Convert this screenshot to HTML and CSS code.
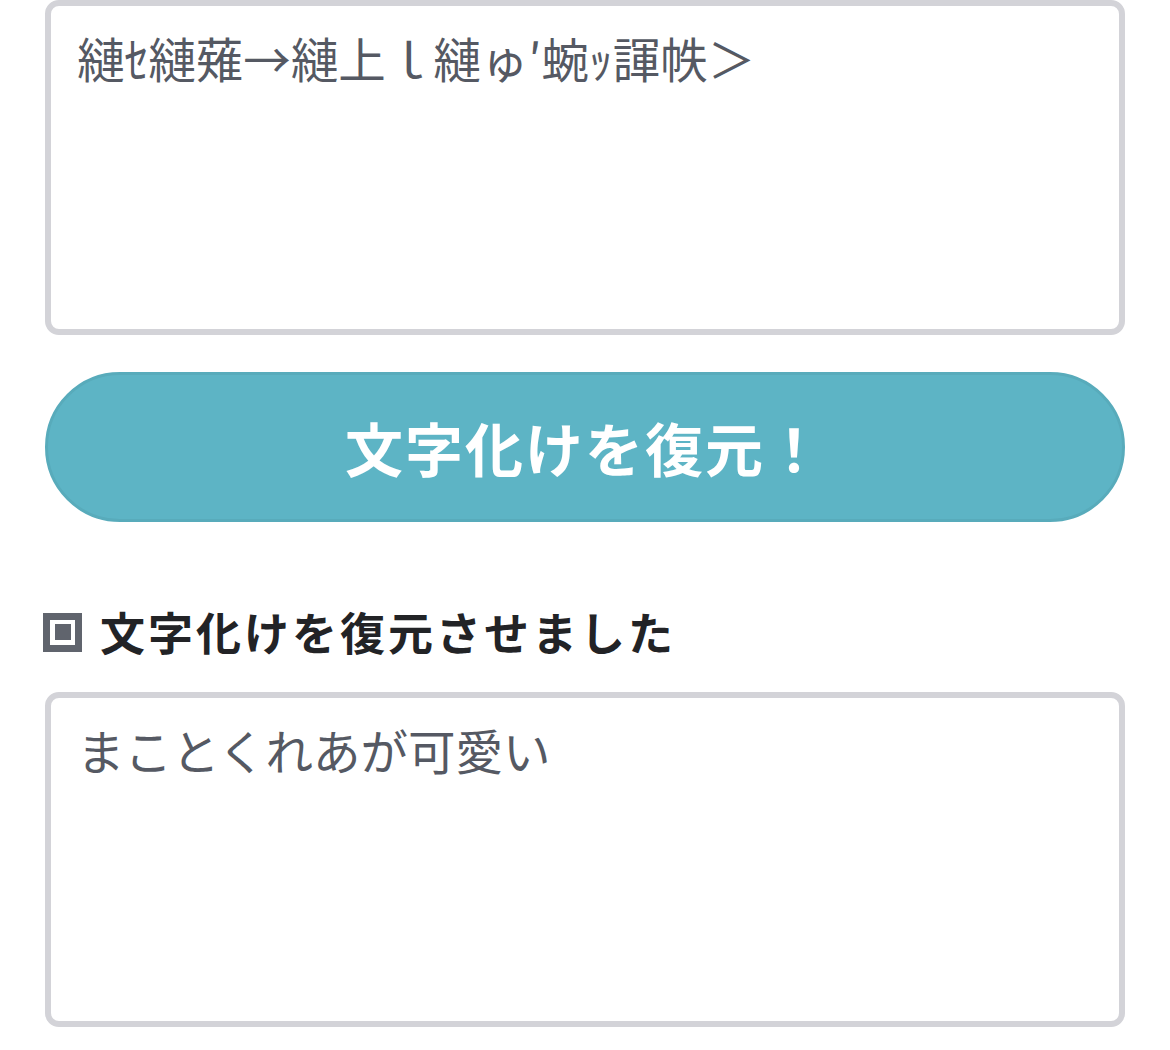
FILE: index.html
```html
<!DOCTYPE html>
<html lang="ja">
<head>
<meta charset="utf-8">
<link rel="stylesheet" href="styles.css">
</head>
<body>
<main class="page">
  <textarea class="box" readonly>縺ｾ縺薙→縺上ｌ縺ゅ′蜿ｯ諢帙＞</textarea>
  <button class="restore" type="button">文字化けを復元！</button>
  <h2 class="result-title"><span class="mark"><span class="mark-inner"></span></span>文字化けを復元させました</h2>
  <textarea class="box" readonly>まことくれあが可愛い</textarea>
</main>
</body>
</html>
```

FILE: styles.css
```css
html, body {
  margin: 0;
  padding: 0;
  background: #ffffff;
}
body {
  font-family: "Noto Sans CJK JP", "Noto Sans", sans-serif;
}
.page {
  display: flex;
  flex-direction: column;
  padding: 0 45px;
}
.box {
  display: block;
  box-sizing: border-box;
  width: 100%;
  height: 335px;
  margin: 0;
  border: 6px solid #d3d3d8;
  border-radius: 14px;
  padding: 16px 26px;
  font-family: "Noto Sans CJK JP", sans-serif;
  font-size: 47.5px;
  line-height: 1.5;
  color: #555963;
  background: #ffffff;
  resize: none;
  outline: none;
  overflow: hidden;
}
.restore {
  display: flex;
  align-items: center;
  justify-content: center;
  box-sizing: border-box;
  width: 100%;
  height: 150px;
  margin: 37px 0 0;
  padding: 0;
  border: 3px solid #58abbb;
  border-radius: 75px;
  background: #5db4c5;
  color: #ffffff;
  font-family: "Noto Sans CJK JP", sans-serif;
  font-weight: 700;
  font-size: 58px;
  letter-spacing: 2px;
}
.result-title {
  display: flex;
  align-items: center;
  gap: 18px;
  height: 60px;
  margin: 80px 0 30px;
  font-size: 45px;
  font-weight: 700;
  letter-spacing: 3px;
  color: #222326;
  line-height: 60px;
}
.mark {
  display: flex;
  align-items: center;
  justify-content: center;
  box-sizing: border-box;
  width: 39px;
  height: 39px;
  margin-left: -2px;
  border: 7px solid #60646d;
  flex: none;
}
.mark-inner {
  width: 16px;
  height: 16px;
  background: #60646d;
}
```
